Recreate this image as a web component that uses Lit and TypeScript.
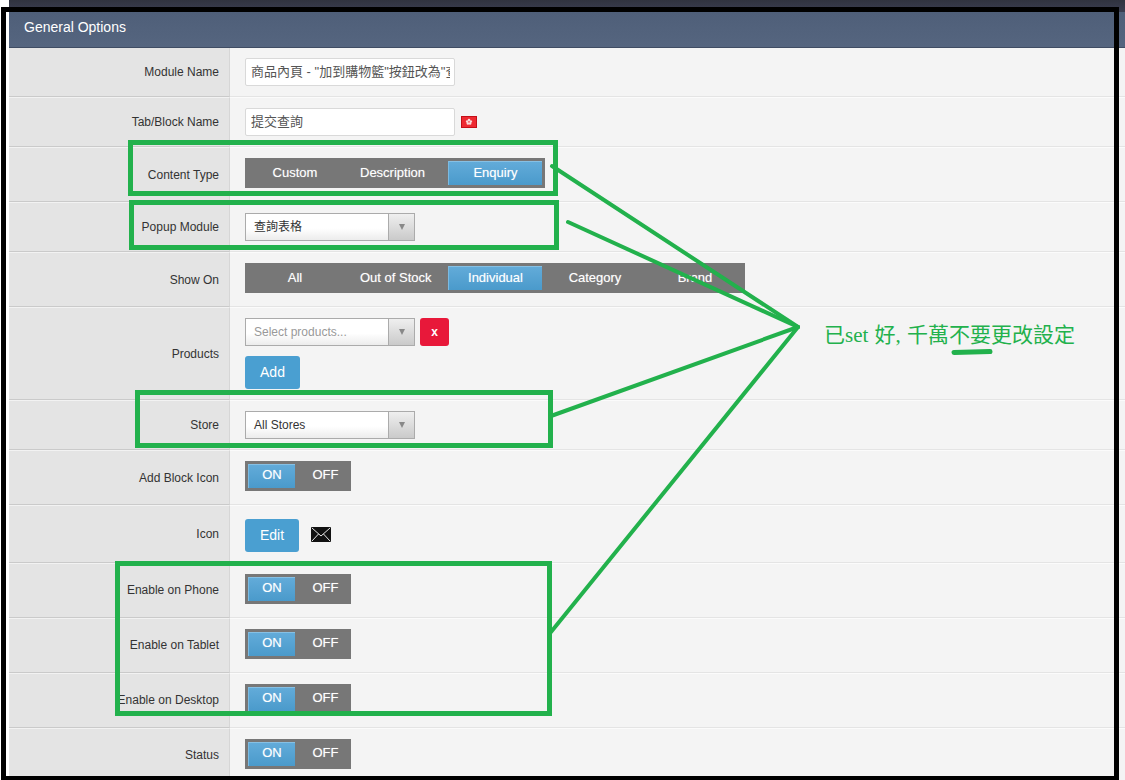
import { LitElement, html, css } from "lit";
import { customElement } from "lit/decorators.js";

type Seg = { label: string; active?: boolean; start?: boolean };

const CONTENT_TABS: Seg[] = [
  { label: "Custom" },
  { label: "Description", start: true },
  { label: "Enquiry", active: true },
];
const SHOW_TABS: Seg[] = [
  { label: "All" },
  { label: "Out of Stock", start: true },
  { label: "Individual", active: true },
  { label: "Category" },
  { label: "Brand" },
];
const ON_OFF: Seg[] = [{ label: "ON", active: true }, { label: "OFF" }];

@customElement("app-root")
export class AppRoot extends LitElement {
  static styles = css`
    :host {
      display: block;
      position: relative;
      width: 1125px;
      height: 780px;
      overflow: hidden;
      background: #fff;
      font-family: "Liberation Sans", "Noto Sans CJK TC", sans-serif;
      font-size: 12px;
      color: #333;
    }
    .page {
      margin-left: 9px;
      background: #f4f4f4;
    }
    .topbar {
      height: 12px;
      background: linear-gradient(#30333f, #3a3d50);
    }
    .header {
      height: 35px;
      border-bottom: 1px solid #3f4c63;
      background: linear-gradient(#4f5f79, #55657f);
      color: #fff;
      font-size: 14px;
      line-height: 30px;
      padding-left: 15px;
    }
    .row {
      display: grid;
      grid-template-columns: 221px 1fr;
    }
    .label {
      display: flex;
      align-items: center;
      justify-content: flex-end;
      padding-right: 10px;
      background: #e4e4e4;
      border-top: 1px solid #f2f2f2;
      border-right: 1px solid #d6d6d6;
      border-bottom: 1px solid #cacaca;
      white-space: nowrap;
    }
    .value {
      padding: 10px 0 10px 15px;
      border-top: 1px solid #fbfbfb;
      border-bottom: 1px solid #e4e4e4;
      background: #f4f4f4;
    }
    .row.first .label,
    .row.first .value {
      border-top: 0;
    }
    .row.seg-row .value {
      padding-bottom: 13px;
    }
    .row.icon-row .value {
      padding-top: 13px;
    }
    .row.lift .label {
      padding-bottom: 2px;
    }
    .line {
      display: flex;
      align-items: center;
    }
    .input {
      width: 210px;
      height: 28px;
      box-sizing: border-box;
      padding: 0 4px 0 5px;
      background: #fff;
      border: 1px solid #d9d9d9;
      border-radius: 2px;
      color: #555;
      font-size: 13px;
    }
    .input-text {
      line-height: 26px;
      height: 26px;
      overflow: hidden;
      white-space: nowrap;
    }
    .flag {
      margin-left: 6px;
      display: block;
    }
    .seg {
      display: inline-flex;
      background: #777;
      vertical-align: top;
    }
    .seg-item {
      flex: 0 0 94px;
      height: 24px;
      margin: 3px;
      box-sizing: border-box;
      display: flex;
      align-items: center;
      justify-content: center;
      padding-bottom: 2px;
      color: #fff;
      font-size: 13px;
      white-space: nowrap;
      text-shadow: 0 0 1px rgba(255, 255, 255, 0.45);
    }
    .seg-item.start {
      justify-content: flex-start;
      padding-left: 12px;
    }
    .seg-item.active {
      background: linear-gradient(#62abd9, #4a9acb);
      border-top: 1px solid #86c0e4;
      border-left: 1px solid #7cbae0;
    }
    .seg.toggle .seg-item {
      flex-basis: 47px;
      padding-bottom: 3px;
    }
    .seg.toggle .seg-item.active {
      padding-bottom: 5px;
    }
    .seg.toggle .seg-item:not(.active) {
      padding-left: 2px;
    }
    .select {
      display: flex;
      width: 170px;
      height: 28px;
      box-sizing: border-box;
      border: 1px solid #ababab;
      background: linear-gradient(#fff 55%, #ececec);
    }
    .select-text {
      flex: 1;
      padding-left: 8px;
      line-height: 26px;
      color: #333;
    }
    .select-text.placeholder {
      color: #999;
    }
    .select-arrow {
      width: 25px;
      border-left: 1px solid #ababab;
      background: linear-gradient(#efefef, #cacaca);
      display: flex;
      align-items: center;
      justify-content: center;
    }
    .triangle {
      width: 0;
      height: 0;
      border-left: 3.5px solid transparent;
      border-right: 3.5px solid transparent;
      border-top: 6px solid #888;
    }
    .btn-x {
      margin-left: 5px;
      width: 29px;
      height: 28px;
      border-radius: 3px;
      background: #e8183a;
      color: #fff;
      font-weight: 700;
      font-size: 12px;
      display: flex;
      align-items: center;
      justify-content: center;
    }
    .btn {
      height: 33px;
      box-sizing: border-box;
      padding-bottom: 2px;
      border-radius: 3px;
      background: #4a9fd1;
      color: #fff;
      font-size: 14px;
      display: flex;
      align-items: center;
      justify-content: center;
    }
    .btn.add {
      width: 55px;
      margin-top: 10px;
    }
    .btn.edit {
      width: 54px;
    }
    .mail {
      display: block;
      margin: 0 0 3px 12px;
    }
    .frame {
      position: absolute;
      left: 0;
      top: 0;
      pointer-events: none;
    }
    .note {
      position: absolute;
      left: 824px;
      top: 321px;
      color: #22b14c;
      font-family: "Liberation Serif", "Noto Sans CJK TC", serif;
      font-size: 21px;
      line-height: 28px;
      word-spacing: 1px;
      white-space: nowrap;
    }
  `;

  private seg(items: Seg[], toggle = false) {
    return html`<div class="seg ${toggle ? "toggle" : ""}">
      ${items.map(
        (i) =>
          html`<div class="seg-item ${i.active ? "active" : ""} ${i.start ? "start" : ""}">${i.label}</div>`
      )}
    </div>`;
  }

  private select(text: string, placeholder = false) {
    return html`<div class="select">
      <div class="select-text ${placeholder ? "placeholder" : ""}">${text}</div>
      <div class="select-arrow"><div class="triangle"></div></div>
    </div>`;
  }

  private row(label: string, body: unknown, cls = "") {
    return html`<div class="row ${cls}">
      <div class="label">${label}</div>
      <div class="value">${body}</div>
    </div>`;
  }

  private flag() {
    return html`<svg class="flag" width="16" height="12" viewBox="0 0 16 12">
      <rect x="0.5" y="0.5" width="15" height="11" fill="#ee2a32" stroke="#c40f18" />
      <g fill="#fbdada">
        <circle cx="8" cy="4" r="1.3" />
        <circle cx="6.2" cy="5.5" r="1.3" />
        <circle cx="9.8" cy="5.5" r="1.3" />
        <circle cx="6.9" cy="7.4" r="1.3" />
        <circle cx="9.1" cy="7.4" r="1.3" />
      </g>
      <circle cx="8" cy="5.9" r="0.8" fill="#ee6a70" />
    </svg>`;
  }

  private mail() {
    return html`<svg class="mail" width="20" height="15" viewBox="0 0 20 15">
      <rect width="20" height="15" rx="1" fill="#111" />
      <path d="M1 1 10 9 19 1M1 14 7.5 7M19 14 12.5 7" fill="none" stroke="#e6e6e6" stroke-width="1" />
    </svg>`;
  }

  private annotations() {
    const green = "#22b14c";
    return html`<svg class="frame" width="1125" height="780" viewBox="0 0 1125 780">
      <path d="M3.5 9.5H1116.5V778.5H3.5Z" fill="none" stroke="#000" stroke-width="5" />
      <g fill="none" stroke=${green} stroke-width="5">
        <rect x="130.5" y="142.5" width="425" height="51" />
        <rect x="131.5" y="202.5" width="425" height="45" />
        <rect x="137.5" y="392.5" width="413" height="53" />
        <rect x="117.5" y="563.5" width="432" height="150" />
      </g>
      <g fill="none" stroke=${green} stroke-width="4" stroke-linecap="round">
        <path d="M552 166 798 327" />
        <path d="M568 222 798 327" />
        <path d="M551 416 798 327" />
        <path d="M551 632 798 327" />
        <path d="M954 352.5 990 351.5" stroke-width="5" />
      </g>
    </svg>`;
  }

  render() {
    return html`
      <div class="page">
        <div class="topbar"></div>
        <div class="header">General Options</div>
        ${this.row(
          "Module Name",
          html`<div class="input"><div class="input-text">商品內頁 - "加到購物籃"按鈕改為"查</div></div>`,
          "first"
        )}
        ${this.row(
          "Tab/Block Name",
          html`<div class="line"><div class="input"><div class="input-text">提交查詢</div></div>${this.flag()}</div>`
        )}
        ${this.row("Content Type", this.seg(CONTENT_TABS), "seg-row")}
        ${this.row("Popup Module", this.select("查詢表格"))}
        ${this.row("Show On", this.seg(SHOW_TABS), "seg-row")}
        ${this.row(
          "Products",
          html`<div class="line">${this.select("Select products...", true)}<div class="btn-x">x</div></div>
            <div class="btn add">Add</div>`
        )}
        ${this.row("Store", this.select("All Stores"))}
        ${this.row("Add Block Icon", this.seg(ON_OFF, true), "seg-row")}
        ${this.row("Icon", html`<div class="line"><div class="btn edit">Edit</div>${this.mail()}</div>`, "icon-row")}
        ${this.row("Enable on Phone", this.seg(ON_OFF, true), "seg-row lift")}
        ${this.row("Enable on Tablet", this.seg(ON_OFF, true), "seg-row lift")}
        ${this.row("Enable on Desktop", this.seg(ON_OFF, true), "seg-row lift")}
        ${this.row("Status", this.seg(ON_OFF, true), "seg-row lift")}
      </div>
      ${this.annotations()}
      <div class="note">已set 好, 千萬不要更改設定</div>
    `;
  }
}
